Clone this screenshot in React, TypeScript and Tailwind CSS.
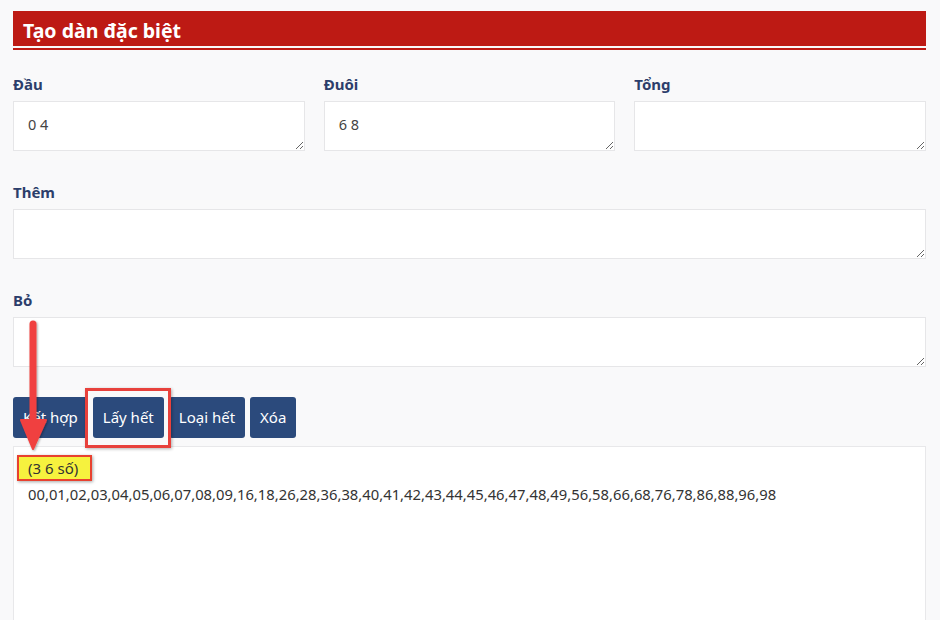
import React from 'react';

const numbers =
  '00,01,02,03,04,05,06,07,08,09,16,18,26,28,36,38,40,41,42,43,44,45,46,47,48,49,56,58,66,68,76,78,86,88,96,98';

function Field({ label, value = '' }: { label: string; value?: string }) {
  return (
    <div className="flex flex-col">
      <label className="mb-[6px] h-[22px] text-[15px] leading-[22px] font-bold text-[#2c3e6b]">{label}</label>
      <textarea
        defaultValue={value}
        className="h-[50px] w-full resize-y border border-[#e6e6e8] bg-white px-[14px] py-[12px] text-[14.5px] leading-[20px] text-[#444] outline-none"
      />
    </div>
  );
}

export default function App() {
  return (
    <div
      className="relative min-h-[620px] bg-[#f9f9fa] pt-[11px] pr-[14px] pl-[13px]"
      style={{ fontFamily: '"Noto Sans", "Open Sans", sans-serif' }}
    >
      {/* Header */}
      <div className="border-b-2 border-[#bd1a14] pb-[2px]">
        <div className="flex h-[35px] items-center bg-[#bd1a14] px-[10px] pt-[4px]">
          <h2 className="text-[19.5px] font-bold text-white">Tạo dàn đặc biệt</h2>
        </div>
      </div>

      <div className="mt-[23px] grid grid-cols-3 gap-x-[19px]">
        <Field label="Đầu" value="0 4" />
        <Field label="Đuôi" value="6 8" />
        <Field label="Tổng" />
      </div>

      <div className="mt-[30px]">
        <Field label="Thêm" />
      </div>

      <div className="mt-[30px]">
        <Field label="Bỏ" />
      </div>

      {/* Buttons */}
      <div className="mt-[30px] flex gap-[5px]">
        {['Kết hợp', 'Lấy hết', 'Loại hết', 'Xóa'].map((b) => (
          <button
            key={b}
            className="h-[41px] rounded-[3px] bg-[#2b4a7c] px-[10px] text-[15px] text-white"
          >
            {b}
          </button>
        ))}
      </div>

      {/* Result */}
      <div className="mt-[8px] h-[200px] border border-[#e8e8ea] bg-white px-[3px] pt-[8px]">
        <div className="inline-flex h-[26px] items-center border-2 border-[#e8412f] bg-[#f6f23e] pr-[12px] pl-[9px] text-[15px] text-[#333] shadow-[1px_1px_3px_rgba(0,0,0,0.35)]">
          (3 6 số)
        </div>
        <div className="mt-[3px] pl-[11px] text-[14.8px] leading-[20px] text-[#333]">{numbers}</div>
      </div>

      {/* Annotation: highlight box */}
      <div className="pointer-events-none absolute top-[388px] left-[85px] h-[60px] w-[86px] border-[3px] border-[#e8413c] shadow-[1px_1px_3px_rgba(0,0,0,0.3)]" />

      {/* Annotation: arrow */}
      <svg className="pointer-events-none absolute top-[318px] left-[18px]" width="34" height="136" viewBox="0 0 34 136">
        <defs>
          <filter id="s" x="-50%" y="-10%" width="200%" height="120%">
            <feDropShadow dx="1" dy="1" stdDeviation="1" floodOpacity="0.35" />
          </filter>
        </defs>
        <g filter="url(#s)" fill="#f0413f" stroke="#f0413f">
          <line x1="15" y1="6" x2="15" y2="104" strokeWidth="7" strokeLinecap="round" />
          <polygon points="3,102 28,102 15,131" strokeWidth="2" strokeLinejoin="round" />
        </g>
      </svg>
    </div>
  );
}
